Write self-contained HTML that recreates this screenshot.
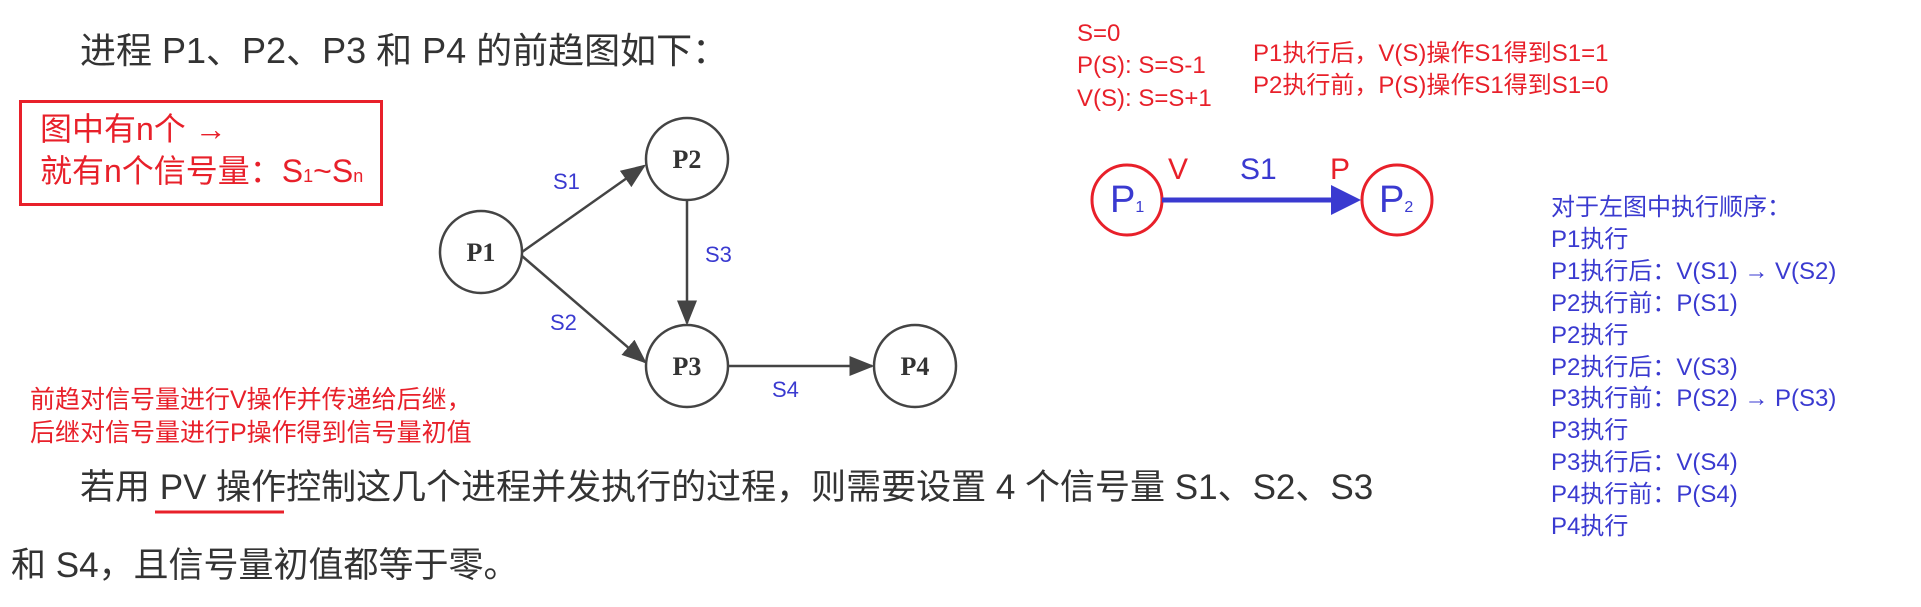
<!DOCTYPE html>
<html><head><meta charset="utf-8"><style>
body{margin:0;width:1921px;height:607px;background:#fff;position:relative;overflow:hidden;font-family:"Liberation Sans","Noto Sans CJK SC",sans-serif}
.t{position:absolute;white-space:nowrap;line-height:1}
.g{color:#333;font-size:35px}
.r{color:#e8202a}
.b{color:#3a3ad0}
</style></head><body>
<div class="t g" style="left:80px;top:33px;font-size:36px">进程 P1、P2、P3 和 P4 的前趋图如下：</div>
<div style="position:absolute;left:19px;top:100px;width:358px;height:100px;border:3px solid #e8202a"></div>
<div class="t r" style="left:40px;top:113px;font-size:32px">图中有n个 →</div>
<div class="t r" style="left:40px;top:155px;font-size:32px">就有n个信号量：S<span style="font-size:18px">1</span>~S<span style="font-size:18px">n</span></div>
<svg style="position:absolute;left:0;top:0" width="1921" height="607">
<defs><marker id="a" markerWidth="10" markerHeight="8" refX="9" refY="4" orient="auto"><path d="M0,0 L10,4 L0,8 z" fill="#444"/></marker>
<marker id="bb" markerWidth="6" markerHeight="6" refX="5" refY="3" orient="auto"><path d="M0,0 L6,3 L0,6 z" fill="#3a3ad0"/></marker></defs>
<g stroke="#444" stroke-width="2.5" fill="none">
<circle cx="481" cy="252" r="41"/><circle cx="687" cy="159" r="41"/><circle cx="687" cy="366" r="41"/><circle cx="915" cy="366" r="41"/>
<line x1="522" y1="252" x2="644" y2="166" marker-end="url(#a)"/>
<line x1="522" y1="256" x2="645" y2="362" marker-end="url(#a)"/>
<line x1="687" y1="200" x2="687" y2="323" marker-end="url(#a)"/>
<line x1="728" y1="366" x2="872" y2="366" marker-end="url(#a)"/>
</g>
<g font-family="Liberation Serif,serif" font-weight="bold" font-size="26" fill="#333" text-anchor="middle">
<text x="481" y="261">P1</text><text x="687" y="168">P2</text><text x="687" y="375">P3</text><text x="915" y="375">P4</text></g>
<g stroke="#e8202a" stroke-width="3" fill="none"><circle cx="1127" cy="200" r="35"/><circle cx="1397" cy="200" r="35"/></g>
<line x1="1162" y1="200" x2="1356" y2="200" stroke="#3a3ad0" stroke-width="5" marker-end="url(#bb)"/>
<line x1="155" y1="512" x2="284" y2="512" stroke="#e8202a" stroke-width="3"/>
</svg>
<div class="t b" style="left:553px;top:171px;font-size:22px">S1</div>
<div class="t b" style="left:705px;top:244px;font-size:22px">S3</div>
<div class="t b" style="left:550px;top:312px;font-size:22px">S2</div>
<div class="t b" style="left:772px;top:379px;font-size:22px">S4</div>
<div class="t r" style="left:30px;top:388px;font-size:25px">前趋对信号量进行V操作并传递给后继，</div>
<div class="t r" style="left:30px;top:421px;font-size:25px">后继对信号量进行P操作得到信号量初值</div>
<div class="t g" style="left:80px;top:470px">若用 PV 操作控制这几个进程并发执行的过程，则需要设置 4 个信号量 S1、S2、S3</div>
<div class="t g" style="left:11px;top:548px">和 S4，且信号量初值都等于零。</div>
<div class="t r" style="left:1077px;top:22px;font-size:24px">S=0</div>
<div class="t r" style="left:1077px;top:54px;font-size:24px">P(S): S=S-1</div>
<div class="t r" style="left:1077px;top:87px;font-size:24px">V(S): S=S+1</div>
<div class="t r" style="left:1253px;top:42px;font-size:24px">P1执行后，V(S)操作S1得到S1=1</div>
<div class="t r" style="left:1253px;top:74px;font-size:24px">P2执行前，P(S)操作S1得到S1=0</div>
<div class="t b" style="left:1110px;top:181px;font-size:38px">P<span style="font-size:16px">1</span></div>
<div class="t b" style="left:1379px;top:181px;font-size:38px">P<span style="font-size:16px">2</span></div>
<div class="t r" style="left:1168px;top:155px;font-size:30px">V</div>
<div class="t b" style="left:1240px;top:155px;font-size:30px">S1</div>
<div class="t r" style="left:1330px;top:155px;font-size:30px">P</div>
<div class="t b" style="left:1551px;top:192px;font-size:24px;line-height:31.9px;white-space:pre">对于左图中执行顺序：
P1执行
P1执行后：V(S1) → V(S2)
P2执行前：P(S1)
P2执行
P2执行后：V(S3)
P3执行前：P(S2) → P(S3)
P3执行
P3执行后：V(S4)
P4执行前：P(S4)
P4执行</div>
</body></html>
